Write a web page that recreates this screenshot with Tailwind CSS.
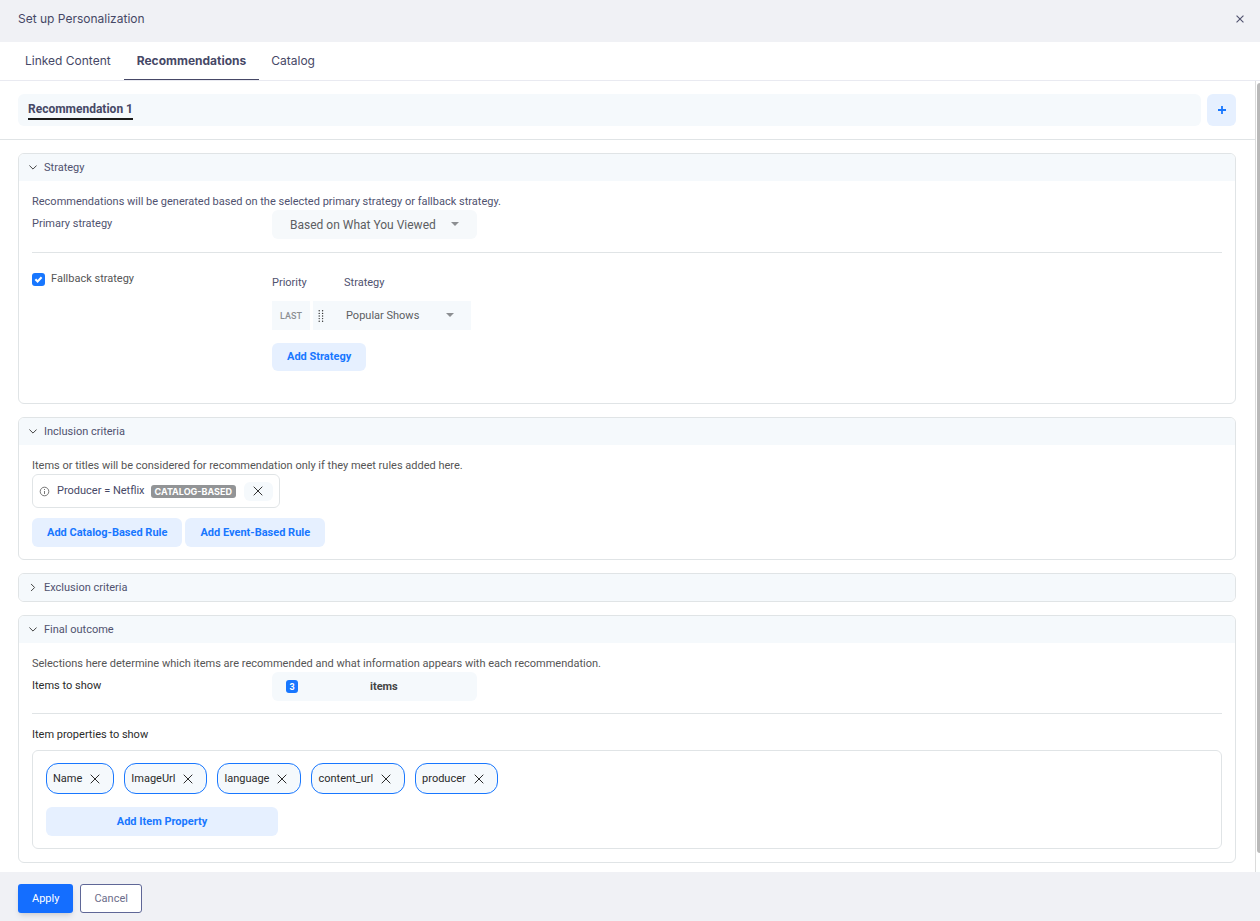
<!doctype html>
<html lang="en">
  <head>
    <meta charset="UTF-8" />
    <meta name="viewport" content="width=device-width, initial-scale=1.0" />
    <title>Set up Personalization</title>
    <script src="https://cdn.jsdelivr.net/npm/@tailwindcss/browser@4"></script>
  </head>
  <body class="flex h-screen flex-col bg-white font-['Roboto',sans-serif] text-[11px] leading-4 text-[#50526f]">
    <svg class="hidden">
      <symbol id="cross" viewBox="0 0 10 10">
        <path d="M.7.7l8.6 8.6M9.3.7L.7 9.3" fill="none" stroke="currentColor" />
      </symbol>
      <symbol id="chevron" viewBox="0 0 8 5">
        <path d="M.4.5L4 4.1 7.6.5" fill="none" stroke="currentColor" />
      </symbol>
      <symbol id="caret" viewBox="0 0 8 4">
        <path d="M0 0h8L4 4z" fill="currentColor" />
      </symbol>
    </svg>

    <header class="flex h-[42px] shrink-0 items-center justify-between bg-[#f0f1f5] pr-4 pb-1 pl-[18px]">
      <h1 class="font-['Inter',sans-serif] text-xs text-[#464866]">Set up Personalization</h1>
      <button type="button" aria-label="Close" class="text-[#50526f]">
        <svg class="size-2" stroke-width="1.4"><use href="#cross" /></svg>
      </button>
    </header>

    <nav class="flex h-[39px] shrink-0 border-b border-[#e9eaf1] pl-3 font-['Inter',sans-serif] text-xs text-[#464866]">
      <a href="#" class="flex items-center px-[13px]">Linked Content</a>
      <a href="#" class="flex items-center border-b border-[#464866] px-[13px] font-bold">Recommendations</a>
      <a href="#" class="flex items-center px-3">Catalog</a>
    </nav>

    <div class="flex min-h-0 flex-1">
      <main class="min-w-0 flex-1 overflow-y-auto border-r border-[#dcdcdc]">
        <div class="flex gap-[6px] border-b border-[#e0e4e6] py-[13px] pr-[19px] pl-[18px]">
          <div class="flex h-8 flex-1 items-center rounded-md bg-[#f5f9fc] px-[10px]">
            <button type="button" class="border-b-2 border-[#1a1a1a] pb-px text-xs font-bold text-[#464866]">Recommendation 1</button>
          </div>
          <button type="button" aria-label="Add recommendation" class="flex h-8 w-[29px] items-center justify-center rounded-md bg-[#e6f0ff] text-[#1877ff]">
            <svg class="size-2" viewBox="0 0 8 8"><path d="M4 0v8M0 4h8" stroke="currentColor" stroke-width="1.8" /></svg>
          </button>
        </div>

        <div class="flex flex-col gap-[13px] py-[13px] pr-[19px] pl-[18px]">
          <section class="overflow-hidden rounded-md border border-[#e0e4e6]">
            <button type="button" class="flex h-[27px] w-full items-center gap-[7px] bg-[#f5f9fc] px-[10px]">
              <svg class="h-[5px] w-2 text-[#444]"><use href="#chevron" /></svg>Strategy
            </button>
            <div class="px-[13px] pt-[13px] pb-8">
              <p>Recommendations will be generated based on the selected primary strategy or fallback strategy.</p>
              <div class="flex">
                <label for="primary" class="w-60 pt-[6px]">Primary strategy</label>
                <div class="relative">
                  <select id="primary" class="h-[29px] w-[205px] appearance-none rounded-md bg-[#f6f9fb] pl-[18px] text-xs text-[#5c5e62]">
                    <option>Based on What You Viewed</option>
                  </select>
                  <svg class="pointer-events-none absolute top-3 right-[18px] h-1 w-2 text-[#8c8f92]"><use href="#caret" /></svg>
                </div>
              </div>
              <hr class="mt-[13px] border-[#e0e4e6]" />
              <div class="flex pt-[18px]">
                <label class="flex w-60 items-center gap-[6px] self-start text-[#555]">
                  <span class="relative flex">
                    <input type="checkbox" checked class="size-[13px] appearance-none rounded-[3px] bg-[#1877ff]" />
                    <svg class="pointer-events-none absolute inset-0 size-[13px]" viewBox="0 0 13 13"><path d="M3.4 6.3l2.2 2.2 4-4.2" fill="none" stroke="#fff" stroke-width="2.1" /></svg>
                  </span>
                  Fallback strategy
                </label>
                <div>
                  <div class="flex pt-1">
                    <span class="w-[72px]">Priority</span>
                    <label for="fallback">Strategy</label>
                  </div>
                  <div class="mt-[10px] flex gap-[3px]">
                    <span class="flex h-[29px] w-[38px] items-center justify-center bg-[#f5f9fc] text-[9px] font-medium text-[#8c8f92]">LAST</span>
                    <div class="relative flex items-center bg-[#f5f9fc] pl-[5px]">
                      <svg class="h-3 w-[6px] text-[#333]" viewBox="0 0 6 12" fill="none" stroke="currentColor" stroke-width="1.4" stroke-linecap="round">
                        <path d="M1.2.8h0M1.2 3.4h0M1.2 6h0M1.2 8.6h0M1.2 11.2h0M4.6.8h0M4.6 3.4h0M4.6 6h0M4.6 8.6h0M4.6 11.2h0" />
                      </svg>
                      <select id="fallback" class="h-[29px] w-[147px] appearance-none pl-[22px] text-[11px] text-[#5c5e62]">
                        <option>Popular Shows</option>
                      </select>
                      <svg class="pointer-events-none absolute top-3 right-[17px] h-1 w-2 text-[#8c8f92]"><use href="#caret" /></svg>
                    </div>
                  </div>
                  <button type="button" class="mt-[13px] h-7 rounded-md bg-[#e6f0ff] px-[15px] font-bold text-[#1877ff]">Add Strategy</button>
                </div>
              </div>
            </div>
          </section>

          <section class="overflow-hidden rounded-md border border-[#e0e4e6]">
            <button type="button" class="flex h-[27px] w-full items-center gap-[7px] bg-[#f5f9fc] px-[10px]">
              <svg class="h-[5px] w-2 text-[#444]"><use href="#chevron" /></svg>Inclusion criteria
            </button>
            <div class="px-[13px] pt-[13px] pb-3">
              <p class="text-[#555]">Items or titles will be considered for recommendation only if they meet rules added here.</p>
              <div class="flex h-[34px] w-fit items-center rounded-md border border-[#e0e4e6] px-[6px] text-[#464866]">
                <svg class="mr-[7px] size-[11px] text-[#555]" viewBox="0 0 11 11" fill="none" stroke="currentColor" stroke-width=".8">
                  <circle cx="5.5" cy="5.5" r="4.3" />
                  <path d="M5.5 5v3M5.5 3v1" />
                </svg>
                Producer = Netflix
                <span class="ml-[6px] rounded-[3px] bg-[#929496] px-1 font-['Inter',sans-serif] text-[9px] leading-[13px] font-bold text-white">CATALOG-BASED</span>
                <button type="button" aria-label="Remove rule" class="ml-2 flex h-[19px] w-[29px] items-center justify-center rounded-md bg-[#f5f9fc] text-[#333]">
                  <svg class="size-[10px]"><use href="#cross" /></svg>
                </button>
              </div>
              <div class="mt-[10px] flex gap-[3px]">
                <button type="button" class="h-[29px] rounded-md bg-[#e6f0ff] px-[15px] font-bold text-[#1877ff]">Add Catalog-Based Rule</button>
                <button type="button" class="h-[29px] rounded-md bg-[#e6f0ff] px-[15px] font-bold text-[#1877ff]">Add Event-Based Rule</button>
              </div>
            </div>
          </section>

          <section class="overflow-hidden rounded-md border border-[#e0e4e6]">
            <button type="button" class="flex h-[27px] w-full items-center gap-[7px] bg-[#f5f9fc] px-[10px]">
              <svg class="h-[5px] w-2 -rotate-90 text-[#444]"><use href="#chevron" /></svg>Exclusion criteria
            </button>
          </section>

          <section class="overflow-hidden rounded-md border border-[#e0e4e6]">
            <button type="button" class="flex h-[27px] w-full items-center gap-[7px] bg-[#f5f9fc] px-[10px]">
              <svg class="h-[5px] w-2 text-[#444]"><use href="#chevron" /></svg>Final outcome
            </button>
            <div class="p-[13px] text-[#2b2b2b]">
              <p class="text-[#555]">Selections here determine which items are recommended and what information appears with each recommendation.</p>
              <div class="flex">
                <label for="count" class="w-60 pt-[6px]">Items to show</label>
                <div class="flex h-[29px] w-[205px] items-center rounded-md bg-[#f5f9fc] pl-[14px] font-bold text-[#444]">
                  <input id="count" type="text" value="3" class="h-[13px] w-3 rounded-[3px] bg-[#1877ff] text-center text-[9px] text-white" />
                  <span class="ml-[72px]">items</span>
                </div>
              </div>
              <hr class="mt-3 border-[#e0e4e6]" />
              <h2 class="mt-[13px]">Item properties to show</h2>
              <div class="mt-[7px] rounded-md border border-[#e0e4e6] px-[13px] py-3">
                <ul class="flex flex-wrap gap-[10px]">
                  <li class="flex h-[31px] items-center gap-2 rounded-xl border border-[#1877ff] bg-[#f5f9fc] pr-[13px] pl-[6px]">
                    Name
                    <button type="button" aria-label="Remove Name"><svg class="size-[10px]"><use href="#cross" /></svg></button>
                  </li>
                  <li class="flex h-[31px] items-center gap-2 rounded-xl border border-[#1877ff] bg-[#f5f9fc] pr-[13px] pl-[6px]">
                    ImageUrl
                    <button type="button" aria-label="Remove ImageUrl"><svg class="size-[10px]"><use href="#cross" /></svg></button>
                  </li>
                  <li class="flex h-[31px] items-center gap-2 rounded-xl border border-[#1877ff] bg-[#f5f9fc] pr-[13px] pl-[6px]">
                    language
                    <button type="button" aria-label="Remove language"><svg class="size-[10px]"><use href="#cross" /></svg></button>
                  </li>
                  <li class="flex h-[31px] items-center gap-2 rounded-xl border border-[#1877ff] bg-[#f5f9fc] pr-[13px] pl-[6px]">
                    content_url
                    <button type="button" aria-label="Remove content_url"><svg class="size-[10px]"><use href="#cross" /></svg></button>
                  </li>
                  <li class="flex h-[31px] items-center gap-2 rounded-xl border border-[#1877ff] bg-[#f5f9fc] pr-[13px] pl-[6px]">
                    producer
                    <button type="button" aria-label="Remove producer"><svg class="size-[10px]"><use href="#cross" /></svg></button>
                  </li>
                </ul>
                <button type="button" class="mt-[13px] h-[29px] w-[232px] rounded-md bg-[#e6f0ff] font-bold text-[#1877ff]">Add Item Property</button>
              </div>
            </div>
          </section>
        </div>
      </main>
      <!-- scrollbar track -->
      <div class="w-1 pt-[2px] pb-[19px] pl-px">
        <div class="h-full rounded-l-sm bg-[#b9b9b9]"></div>
      </div>
    </div>

    <footer class="flex h-[49px] shrink-0 items-start gap-[7px] bg-[#f0f1f5] px-[18px] pt-3">
      <button type="button" class="h-[29px] rounded-[3px] bg-[#146eff] px-[14px] text-white shadow-md shadow-black/10">Apply</button>
      <button type="button" class="h-[29px] rounded-[3px] border border-[#5f6797] bg-white px-[13px] text-[#6b6d8a]">Cancel</button>
    </footer>
  </body>
</html>
